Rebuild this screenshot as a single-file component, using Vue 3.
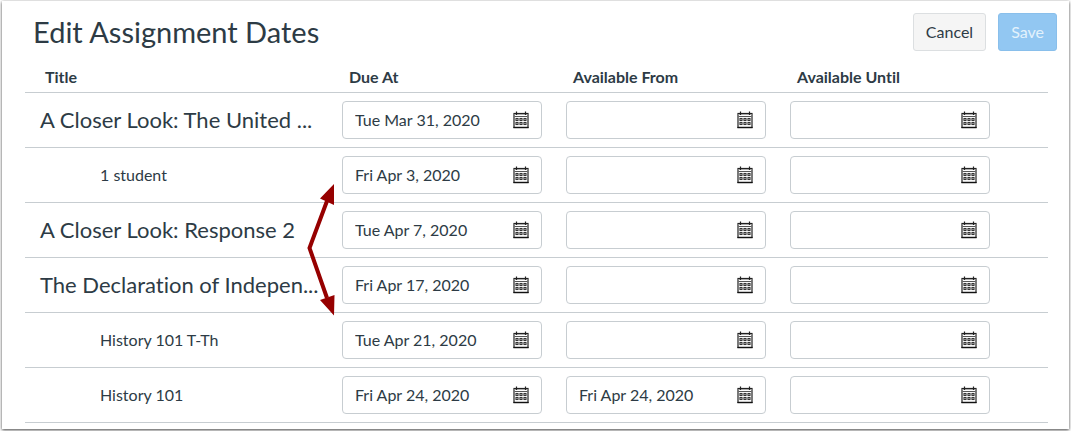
<template>
  <main class="panel">
    <header class="panel-header">
      <h1 class="panel-title">Edit Assignment Dates</h1>
      <div class="actions">
        <button type="button" class="btn">Cancel</button>
        <button type="button" class="btn btn-primary">Save</button>
      </div>
    </header>

    <div class="table-wrap">
      <table class="dates-table">
        <thead>
          <tr>
            <th class="title-col" scope="col">Title</th>
            <th
              v-for="column in columns"
              :key="column.key"
              :class="['date-col', column.key]"
              scope="col"
            >
              {{ column.label }}
            </th>
          </tr>
        </thead>
        <tbody>
          <tr v-for="row in rows" :key="row.id">
            <td :class="row.override ? 'override-name' : 'assignment-name'">{{ row.title }}</td>
            <td v-for="column in columns" :key="column.key" class="date-cell">
              <div class="date-field">
                <input
                  v-model="row[column.key]"
                  class="date-input"
                  type="text"
                  :aria-label="`${row.title} ${column.label}`"
                />
                <button type="button" class="date-button" aria-label="Choose date">
                  <svg width="16" height="18" viewBox="0 0 16 18" aria-hidden="true">
                    <rect x="1" y="2.5" width="14" height="14" fill="#fff" stroke="#222" stroke-width="1.2" />
                    <path d="M1.6 3.5h12.8" stroke="#aaa" />
                    <path d="M1.6 5.5h12.8" stroke="#555" />
                    <path d="M3.5 0.5v3.5M12.5 0.5v3.5" stroke="#222" stroke-width="1.2" />
                    <path d="M0.4 16.5h15.2" stroke="#111" stroke-width="1.3" />
                    <g fill="#fff" stroke="#333" stroke-width="1.1">
                      <rect x="3" y="7.5" width="2" height="2" />
                      <rect x="7" y="7.5" width="2" height="2" />
                      <rect x="11" y="7.5" width="2" height="2" />
                      <rect x="3" y="11.5" width="2" height="2" />
                      <rect x="7" y="11.5" width="2" height="2" />
                      <rect x="11" y="11.5" width="2" height="2" />
                    </g>
                  </svg>
                </button>
              </div>
            </td>
          </tr>
        </tbody>
      </table>

      <!-- Callout arrows pointing at the override dates -->
      <svg class="callout" width="30" height="134" viewBox="0 0 30 134" aria-hidden="true">
        <path d="M22 18L4.5 65L22 115" fill="none" stroke="#960000" stroke-width="4" />
        <path d="M29 1L15 15.5L29 22zM29 132.5L15 117L29.5 112z" fill="#960000" />
      </svg>
    </div>
  </main>
</template>

<script setup>
import { ref } from 'vue'

const columns = [
  { key: 'due', label: 'Due At' },
  { key: 'from', label: 'Available From' },
  { key: 'until', label: 'Available Until' }
]

const rows = ref([
  { id: 1, title: 'A Closer Look: The United ...', override: false, due: 'Tue Mar 31, 2020', from: '', until: '' },
  { id: 2, title: '1 student', override: true, due: 'Fri Apr 3, 2020', from: '', until: '' },
  { id: 3, title: 'A Closer Look: Response 2', override: false, due: 'Tue Apr 7, 2020', from: '', until: '' },
  { id: 4, title: 'The Declaration of Indepen...', override: false, due: 'Fri Apr 17, 2020', from: '', until: '' },
  { id: 5, title: 'History 101 T-Th', override: true, due: 'Tue Apr 21, 2020', from: '', until: '' },
  { id: 6, title: 'History 101', override: true, due: 'Fri Apr 24, 2020', from: 'Fri Apr 24, 2020', until: '' }
])
</script>

<style>
body {
  background: #fff;
}
</style>

<style scoped>
.panel {
  margin: 1px 2px 2px;
  padding: 12px 12px 6px 23px;
  background: #fff;
  box-shadow: 0 1px 3px rgba(0, 0, 0, 0.75);
  color: #2d3b45;
  font-family: Lato, sans-serif;
  font-size: 16px;
  font-variant-ligatures: none;
}

.panel-header {
  display: flex;
  align-items: center;
  justify-content: space-between;
  padding-left: 8px;
}

.panel-title {
  margin: 0;
  font-size: 29px;
  font-weight: 400;
  line-height: 38px;
}

.actions {
  display: flex;
  gap: 12px;
}

.btn {
  height: 38px;
  padding: 0 12px 1px;
  border: 1px solid #dcdfe1;
  border-radius: 3px;
  background: #f5f5f5;
  color: #2d3b45;
  font: inherit;
  cursor: pointer;
}

.btn-primary {
  border-color: #89bfeb;
  background: #92c7f2;
  color: #e3f2fc;
}

.table-wrap {
  position: relative;
  margin-right: 9px;
}

.dates-table {
  width: 100%;
  table-layout: fixed;
  border-collapse: separate;
  border-spacing: 0;
}

th {
  height: 42px;
  box-sizing: border-box;
  padding: 10px 0 0 15px;
  border-bottom: 1px solid #c7cdd1;
  font-weight: 700;
  line-height: 20px;
  text-align: left;
}

.title-col {
  padding-left: 20px;
}

.date-col {
  width: 224px;
}

.date-col.until {
  width: 266px;
}

td {
  height: 55px;
  box-sizing: border-box;
  padding: 0 0 2px 15px;
  border-bottom: 1px solid #c7cdd1;
  white-space: nowrap;
}

.assignment-name {
  font-size: 22px;
}

.override-name {
  padding-left: 75px;
}

.date-cell {
  padding: 0 0 0 8px;
}

.date-field {
  display: flex;
  align-items: center;
  box-sizing: border-box;
  width: 200px;
  height: 38px;
  border: 1px solid #c7cdd1;
  border-radius: 4px;
  background: #fff;
}

.date-input {
  flex: 1;
  min-width: 0;
  padding: 0 0 2px 12px;
  border: 0;
  outline: none;
  background: transparent;
  color: #2d3b45;
  font: inherit;
}

.date-button {
  display: flex;
  padding: 0 12px;
  border: 0;
  background: transparent;
  cursor: pointer;
}

.callout {
  position: absolute;
  top: 132px;
  left: 280px;
  pointer-events: none;
}
</style>
